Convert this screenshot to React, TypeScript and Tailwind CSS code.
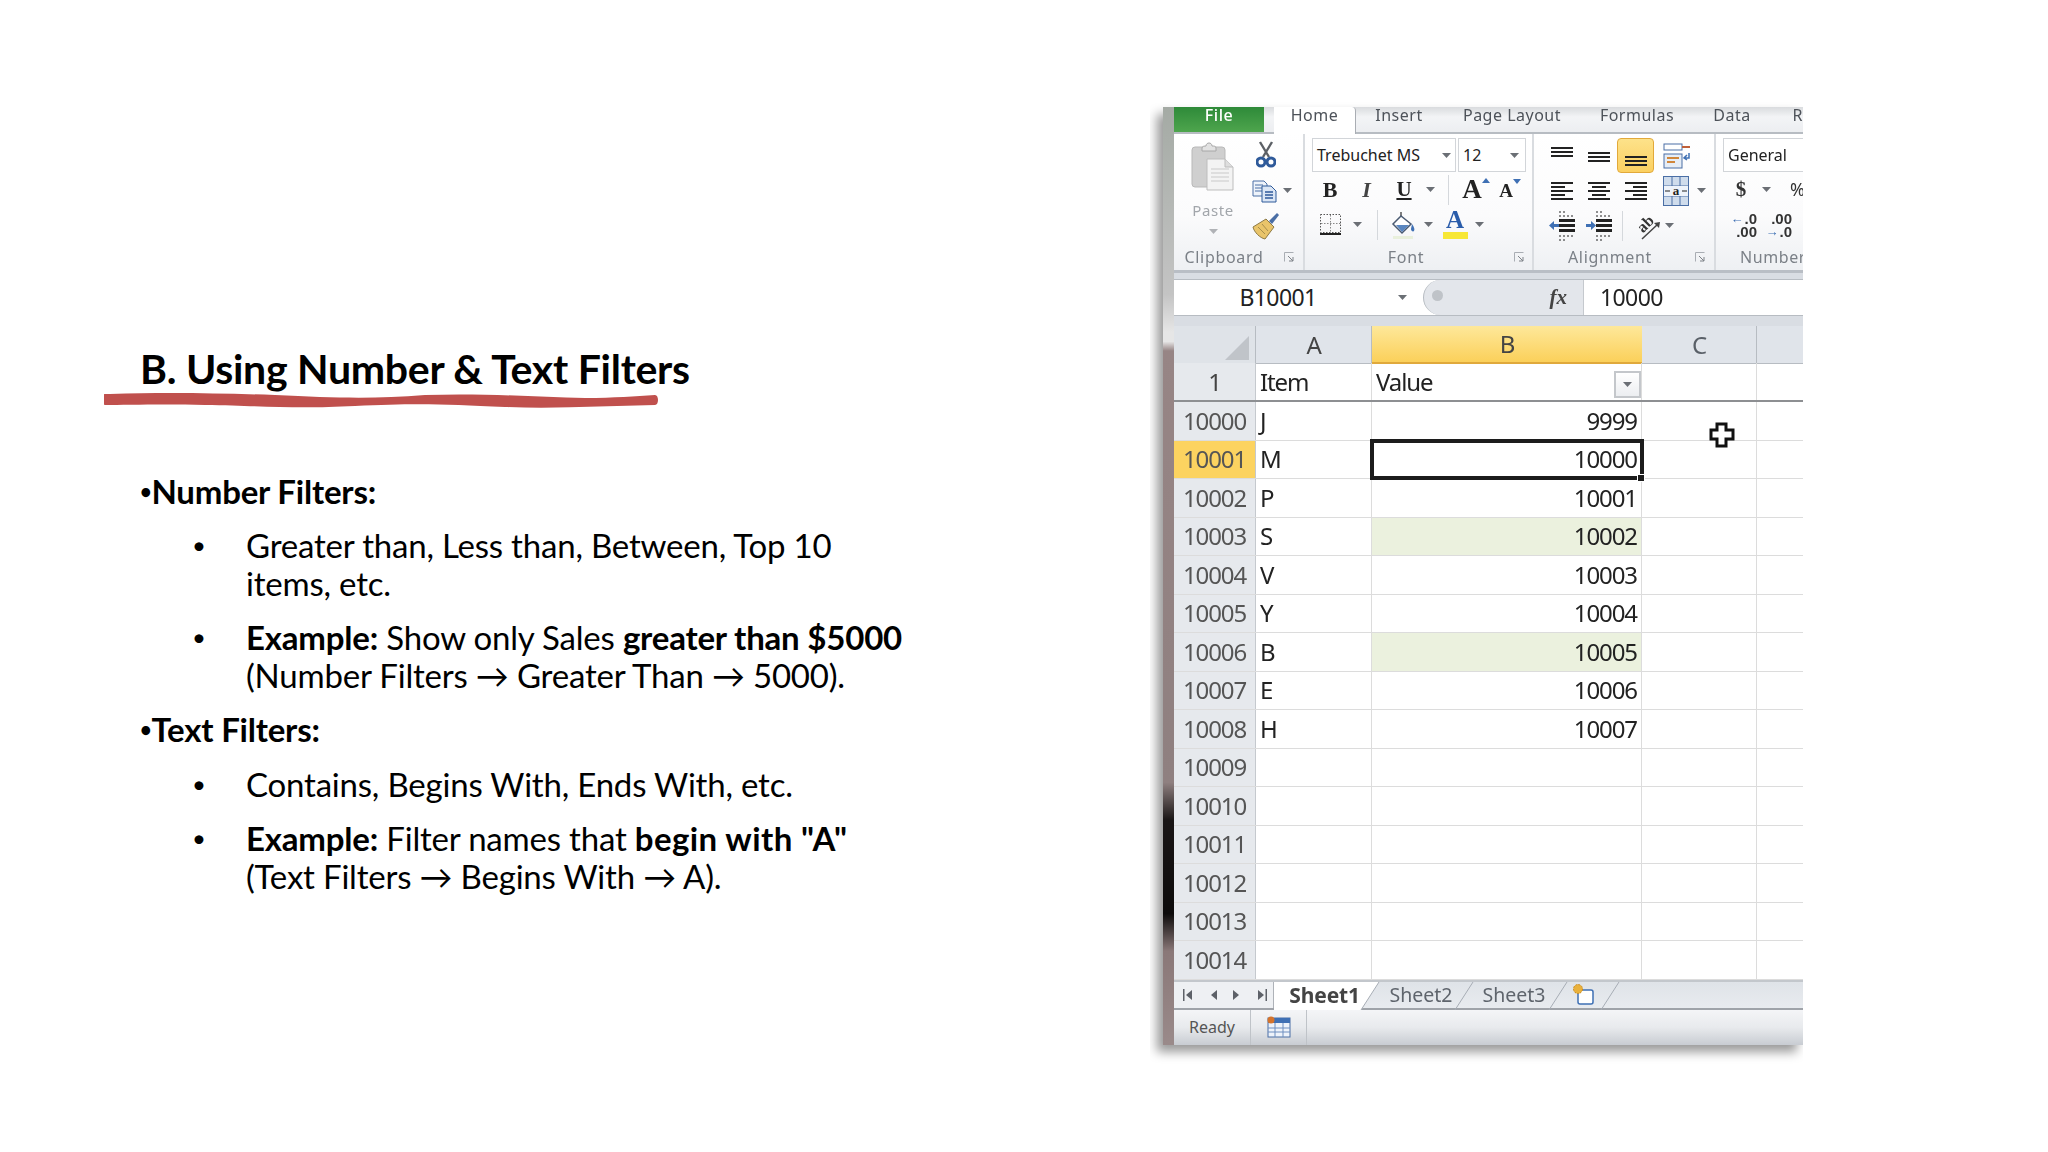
import React from 'react';

const rows = [
  { n: '10000', a: 'J', b: '9999' },
  { n: '10001', a: 'M', b: '10000', active: true },
  { n: '10002', a: 'P', b: '10001' },
  { n: '10003', a: 'S', b: '10002', green: true },
  { n: '10004', a: 'V', b: '10003' },
  { n: '10005', a: 'Y', b: '10004' },
  { n: '10006', a: 'B', b: '10005', green: true },
  { n: '10007', a: 'E', b: '10006' },
  { n: '10008', a: 'H', b: '10007' },
  { n: '10009', a: '', b: '' },
  { n: '10010', a: '', b: '' },
  { n: '10011', a: '', b: '' },
  { n: '10012', a: '', b: '' },
  { n: '10013', a: '', b: '' },
  { n: '10014', a: '', b: '' },
];

const Caret = ({ className = '' }: { className?: string }) => (
  <svg width="9" height="5" viewBox="0 0 9 5" className={className}>
    <path d="M0 0h9L4.5 5z" fill="#6b6f75" />
  </svg>
);

// little stacked-lines icons for the alignment group
const Lines = ({ lines, w = 24, h = 20 }: { lines: number[][]; w?: number; h?: number }) => (
  <svg width={w} height={h} viewBox={`0 0 ${w} ${h}`}>
    {lines.map(([x1, x2, y], i) => (
      <rect key={i} x={x1} y={y} width={x2 - x1} height="2" fill="#222" />
    ))}
  </svg>
);

const ScissorsIcon = () => (
  <svg width="20" height="28" viewBox="0 0 20 28">
    <path d="M4 1l9 15M16 1L7 16" stroke="#5c6066" strokeWidth="2.4" fill="none" />
    <circle cx="5" cy="21" r="4" fill="none" stroke="#2f5a9a" strokeWidth="3" />
    <circle cx="15" cy="21" r="4" fill="none" stroke="#2f5a9a" strokeWidth="3" />
  </svg>
);

const PasteIcon = () => (
  <svg width="44" height="50" viewBox="0 0 44 50">
    <rect x="1" y="6" width="33" height="40" rx="3" fill="#cfcfcf" stroke="#b9b9b9" />
    <path d="M11 7c0-2 3-2 4-2 0-4 6-4 6 0 2 0 4 0 4 2v3H11z" fill="#e2e2e2" stroke="#a8a8a8" />
    <path d="M16 18h18l8 8v23H16z" fill="#f3f3f3" stroke="#bdbdbd" />
    <path d="M34 18v8h8" fill="#dedede" stroke="#bdbdbd" />
    <path d="M20 28h18M20 32h18M20 36h18M20 40h18" stroke="#c9c9c9" />
  </svg>
);

const CopyIcon = () => (
  <svg width="26" height="24" viewBox="0 0 26 24">
    <path d="M1 2h11l3 3v12H1z" fill="#eef3fa" stroke="#4a6ea5" />
    <path d="M3 6h8M3 9h8M3 12h8" stroke="#4a6ea5" />
    <path d="M10 7h9l5 5v11H10z" fill="#dbe6f5" stroke="#2f5a9a" />
    <path d="M13 13h8M13 16h8M13 19h8" stroke="#2f5a9a" strokeWidth="1.5" />
  </svg>
);

const PainterIcon = () => (
  <svg width="28" height="28" viewBox="0 0 28 28">
    <path d="M17 9 25 1l2 2-7 9z" fill="#4a6ea5" />
    <path d="M14 7l8 8-9 12C8 26 2 20 1 15z" fill="#e9c46a" stroke="#8d7a46" />
    <path d="M6 15l7 7M10 12l6 7" stroke="#a88f4c" />
  </svg>
);

const BorderIcon = () => (
  <svg width="24" height="24" viewBox="0 0 24 24">
    <rect x="1.5" y="1.5" width="20" height="18" fill="none" stroke="#555" strokeDasharray="1.5 1.5" />
    <path d="M11.5 2v18M2 10.5h20" stroke="#888" strokeDasharray="1.5 1.5" />
    <rect x="1" y="20" width="21" height="2" fill="#222" />
  </svg>
);

const BucketIcon = () => (
  <svg width="26" height="28" viewBox="0 0 26 28">
    <path d="M10 1v7" stroke="#555" strokeWidth="1.5" />
    <path d="M10 5 2 13l9 9 9-9z" fill="#fff" stroke="#4a5a72" strokeWidth="1.5" />
    <path d="M5 14h13l-7 7z" fill="#5a86c0" />
    <path d="M21 13c2 3 3 5 2 7-1 1-3 0-3-2z" fill="#3f70b4" />
    <rect x="2" y="25" width="20" height="3" fill="#e9f0dc" />
  </svg>
);

const FontColorIcon = () => (
  <div className="flex flex-col items-center">
    <span className="text-[25px] leading-[20px] font-bold text-[#2a5caa] [font-family:'Liberation_Serif',serif]">A</span>
    <span className="block w-[25px] h-[7px] mt-[2px] bg-[#f7e735]" />
  </div>
);

const WrapIcon = () => (
  <svg width="28" height="26" viewBox="0 0 28 26">
    <rect x="1" y="1" width="18" height="6" fill="#fff" stroke="#4a6ea5" />
    <path d="M19 4h8" stroke="#c0603a" strokeWidth="2" />
    <rect x="1" y="11" width="18" height="14" fill="#e6edf6" stroke="#4a6ea5" />
    <path d="M4 15h12M4 19h8" stroke="#d0863a" strokeWidth="2" />
    <path d="M26 10v5h-4M24 12l-3 3 3 2" stroke="#3f70b4" strokeWidth="1.5" fill="none" />
  </svg>
);

const MergeIcon = () => (
  <svg width="26" height="30" viewBox="0 0 26 30">
    <rect x="0.5" y="0.5" width="25" height="29" fill="#cfdcec" stroke="#4a6ea5" />
    <path d="M0 10h26M0 20h26M9 0v10M17 0v10M9 20v10M17 20v10" stroke="#4a6ea5" />
    <rect x="1" y="10" width="24" height="10" fill="#eef3fa" />
    <text x="13" y="19" textAnchor="middle" fontSize="13" fontWeight="700" fill="#222" fontFamily="Liberation Serif">a</text>
    <path d="M2 15h5M24 15h-5" stroke="#222" />
  </svg>
);

const IndentIcon = ({ flip = false }: { flip?: boolean }) => (
  <svg width="28" height="30" viewBox="0 0 28 30">
    <path d="M11 1h8M11 5h14M11 25h14M11 29h8" stroke="#222" strokeDasharray="2 2" />
    <rect x="11" y="8" width="16" height="3" fill="#222" />
    <rect x="11" y="13" width="16" height="3" fill="#222" />
    <rect x="11" y="18" width="16" height="3" fill="#222" />
    {flip ? (
      <path d="M1 13h5v-3l5 4.5-5 4.5v-3H1z" fill="#3f70b4" />
    ) : (
      <path d="M11 13H6v-3l-5 4.5L6 19v-3h5z" fill="#3f70b4" />
    )}
  </svg>
);

const OrientIcon = () => (
  <svg width="26" height="30" viewBox="0 0 26 30">
    <text x="2" y="20" fontSize="16" fontWeight="700" fill="#333" fontFamily="Liberation Serif" transform="rotate(-45 8 14)">ab</text>
    <path d="M7 28 23 13" stroke="#444" strokeWidth="1.5" />
    <path d="M19 12l6-1-1 6z" fill="#444" />
  </svg>
);

const DecimalIcon = ({ more = false }: { more?: boolean }) => (
  <div className="flex flex-col w-[32px] text-[15px] leading-[13px] font-bold text-[#333] [font-family:'Liberation_Sans',sans-serif]">
    <div className="flex items-center justify-end gap-[1px]">
      {!more && <span className="text-[#3f70b4] text-[13px]">←</span>}
      <span>{more ? '.00' : '.0'}</span>
    </div>
    <div className="flex items-center justify-end gap-[1px]">
      {more && <span className="text-[#3f70b4] text-[13px]">→</span>}
      <span>{more ? '.0' : '.00'}</span>
    </div>
  </div>
);

const Launcher = () => (
  <svg width="11" height="11" viewBox="0 0 11 11" className="shrink-0">
    <path d="M0.5 0.5h9M0.5 0.5v9" stroke="#a9adb3" />
    <path d="M4 4l5 5M9 5v4H5" stroke="#7d8187" fill="none" />
  </svg>
);

const GroupLabel = ({ text, className = '', pad = 'pr-[8px]' }: { text: string; className?: string; pad?: string }) => (
  <div className={`h-[26px] flex items-center text-[16px] tracking-[0.7px] text-[#7b8087] ${className}`}>
    <span className={`flex-1 text-center ${pad}`}>{text}</span>
    <Launcher />
  </div>
);

const Cell = ({ w, children, className = '' }: { w: number; children?: React.ReactNode; className?: string }) => (
  <div className={`shrink-0 flex items-center justify-center ${className}`} style={{ width: w }}>
    {children}
  </div>
);

const Sep = () => <div className="w-px h-[30px] bg-[#d5d8dc] shrink-0" />;

const Slash = ({ fill }: { fill?: string }) => (
  <svg width="20" height="28" viewBox="0 0 20 28" className="shrink-0 self-start">
    {fill && <path d="M0 0v28h1L19 0z" fill={fill} />}
    <path d="M1 28 19 0" stroke="#a7adb5" fill="none" />
  </svg>
);

const NavArrow = ({ dir, bar = false }: { dir: 'left' | 'right'; bar?: boolean }) => (
  <svg width="12" height="14" viewBox="0 0 12 14">
    {dir === 'left' ? <path d="M10 2v10L4 7z" fill="#5d6168" /> : <path d="M2 2v10l6-5z" fill="#5d6168" />}
    {bar && (dir === 'left' ? <rect x="1" y="1" width="1.5" height="12" fill="#5d6168" /> : <rect x="9.5" y="1" width="1.5" height="12" fill="#5d6168" />)}
  </svg>
);

function Ribbon() {
  return (
    <>
      <div className="h-[27px] flex items-stretch bg-[linear-gradient(#d9dbde,#f3f4f6_40%,#eceef1)] border-b-2 border-[#b7bcc2] text-[16px] leading-[16px] tracking-[0.5px] text-[#4d5259]">
        <div className="w-[90px] flex items-start justify-center text-white bg-[linear-gradient(#2e8a39,#4ea54d)] font-medium">File</div>
        <div className="w-[10px]" />
        <div className="w-[82px] -mb-[2px] flex items-start justify-center bg-white border-r border-[#a9adb3] rounded-tr-sm">Home</div>
        <div className="w-[86px] flex items-start justify-center">Insert</div>
        <div className="w-[140px] flex items-start justify-center">Page Layout</div>
        <div className="w-[110px] flex items-start justify-center">Formulas</div>
        <div className="w-[80px] flex items-start justify-center">Data</div>
        <div className="flex-1 flex items-start justify-end">R</div>
      </div>

      <div className="h-[139px] flex bg-[linear-gradient(#ffffff,#fbfbfc_60%,#eef0f3)] border-b-[3px] border-[#b9bec5]">
        {/* Clipboard */}
        <div className="w-[131px] shrink-0 flex flex-col border-r-2 border-[#d9dce0]">
          <div className="flex-1 flex">
            <div className="w-[78px] flex flex-col items-center pt-[7px]">
              <PasteIcon />
              <span className="mt-[8px] text-[15px] leading-[22px] tracking-[0.6px] text-[#a2a6ab]">Paste</span>
              <Caret className="mt-[8px] opacity-50" />
            </div>
            <div className="flex flex-col pt-[3px]">
              <div className="h-[36px] flex items-center pl-[4px]">
                <ScissorsIcon />
              </div>
              <div className="h-[35px] flex items-center gap-[5px]">
                <CopyIcon />
                <Caret />
              </div>
              <div className="h-[35px] flex items-center">
                <PainterIcon />
              </div>
            </div>
          </div>
          <GroupLabel text="Clipboard" className="pr-[8px]" pad="pr-[10px]" />
        </div>

        {/* Font */}
        <div className="w-[229px] shrink-0 flex flex-col border-r-2 border-[#d9dce0] pl-[7px]">
          <div className="flex-1 flex flex-col pt-[4px]">
            <div className="flex h-[34px] gap-[2px] text-[16px] text-[#222]">
              <div className="w-[144px] border border-[#d2d5d9] bg-white flex items-center px-[4px]">
                <span className="flex-1 whitespace-nowrap">Trebuchet MS</span>
                <Caret />
              </div>
              <div className="w-[68px] border border-[#d2d5d9] bg-white flex items-center px-[4px]">
                <span className="flex-1">12</span>
                <Caret className="mr-[2px]" />
              </div>
            </div>
            <div className="h-[35px] flex items-center [font-family:'Liberation_Serif',serif] text-[#222]">
              <Cell w={36}><span className="text-[22px] font-bold">B</span></Cell>
              <Cell w={37}><span className="text-[22px] italic font-bold text-[#444]">I</span></Cell>
              <Cell w={38}><span className="text-[21px] font-bold underline">U</span></Cell>
              <Cell w={14}><Caret /></Cell>
              <Cell w={22}><Sep /></Cell>
              <Cell w={34}><span className="text-[27px] font-bold">A</span><span className="w-0 h-0 -mt-[18px] border-x-[4px] border-x-transparent border-b-[5px] border-b-[#3f70b4]" /></Cell>
              <Cell w={34}><span className="text-[19px] font-bold mt-[4px]">A</span><span className="w-0 h-0 -mt-[16px] border-x-[4px] border-x-transparent border-t-[5px] border-t-[#3f70b4]" /></Cell>
            </div>
            <div className="h-[35px] flex items-center">
              <Cell w={38}><BorderIcon /></Cell>
              <Cell w={14}><Caret /></Cell>
              <Cell w={26}><Sep /></Cell>
              <Cell w={28}><BucketIcon /></Cell>
              <Cell w={20}><Caret /></Cell>
              <Cell w={34}><FontColorIcon /></Cell>
              <Cell w={14}><Caret /></Cell>
            </div>
          </div>
          <div className="pr-[7px]"><GroupLabel text="Font" pad="pr-[14px]" /></div>
        </div>

        {/* Alignment */}
        <div className="w-[182px] shrink-0 flex flex-col border-r-2 border-[#d9dce0] pl-[9px]">
          <div className="flex-1 flex flex-col pt-[4px]">
            <div className="h-[35px] flex items-center">
              <Cell w={37}><Lines lines={[[1, 23, 1], [1, 23, 5], [1, 23, 9]]} /></Cell>
              <Cell w={37}><Lines lines={[[1, 23, 6], [1, 23, 10], [1, 23, 14]]} /></Cell>
              <Cell w={37} className="h-[35px] rounded-[4px] border border-[#e2a93a] bg-[linear-gradient(#fde28a,#fbd061)]">
                <Lines lines={[[1, 23, 10], [1, 23, 14], [1, 23, 18]]} />
              </Cell>
              <Cell w={48} className="pr-[3px]"><WrapIcon /></Cell>
            </div>
            <div className="h-[35px] flex items-center">
              <Cell w={37}><Lines lines={[[1, 23, 1], [1, 15, 5], [1, 23, 9], [1, 15, 13], [1, 23, 17]]} /></Cell>
              <Cell w={37}><Lines lines={[[1, 23, 1], [5, 19, 5], [1, 23, 9], [5, 19, 13], [1, 23, 17]]} /></Cell>
              <Cell w={37}><Lines lines={[[1, 23, 1], [9, 23, 5], [1, 23, 9], [9, 23, 13], [1, 23, 17]]} /></Cell>
              <Cell w={43}><MergeIcon /></Cell>
              <Caret />
            </div>
            <div className="h-[35px] flex items-center">
              <Cell w={37}><IndentIcon /></Cell>
              <Cell w={37}><IndentIcon flip /></Cell>
              <Cell w={10}><Sep /></Cell>
              <Cell w={42}><OrientIcon /></Cell>
              <Caret className="-ml-[4px]" />
            </div>
          </div>
          <div className="pr-[8px]"><GroupLabel text="Alignment" pad="pr-[18px]" /></div>
        </div>

        {/* Number, cut off by the crop */}
        <div className="flex-1 min-w-0 overflow-hidden flex flex-col pl-[7px]">
          <div className="flex-1 flex flex-col pt-[4px]">
            <div className="h-[34px] w-[90px] border border-[#d2d5d9] bg-white flex items-center px-[4px] text-[16px] text-[#222]">General</div>
            <div className="h-[35px] flex items-center text-[21px] font-bold text-[#333] [font-family:'Liberation_Serif',serif]">
              <Cell w={36}>$</Cell>
              <Cell w={14}><Caret /></Cell>
              <Cell w={32} className="justify-end font-normal overflow-hidden"><span className="[font-family:'Noto_Sans',sans-serif] text-[18px] pl-[14px]">%</span></Cell>
            </div>
            <div className="h-[35px] flex items-center gap-[3px] pl-[2px]">
              <DecimalIcon />
              <DecimalIcon more />
            </div>
          </div>
          <div className="h-[26px] flex items-center pl-[17px] text-[16px] tracking-[0.6px] text-[#7b8087] whitespace-nowrap">Number</div>
        </div>
      </div>
    </>
  );
}

function FormulaBar() {
  return (
    <div className="bg-[#d9dde3] pt-[6px] pb-[10px]">
      <div className="h-[37px] flex items-stretch bg-white border-y border-[#b7bcc2]">
        <div className="w-[249px] shrink-0 flex items-center text-[23px] tracking-[-0.6px] text-[#222]">
          <span className="flex-1 text-center pr-[16px]">B10001</span>
          <Caret className="mr-[16px]" />
        </div>
        <div className="w-[160px] shrink-0 flex items-center justify-between bg-[#e3e6eb] rounded-l-[22px] border-l border-[#b7bcc2] pl-[8px] pr-[16px]">
          <span className="w-[11px] h-[11px] -mt-[4px] rounded-full bg-[#bfc3c8]" />
          <span className="text-[21px] italic font-bold text-[#444] [font-family:'Liberation_Serif',serif]">fx</span>
        </div>
        <div className="flex-1 flex items-center pl-[16px] text-[23px] tracking-[-0.6px] text-[#222] border-l border-[#c5c9ce]">10000</div>
      </div>
    </div>
  );
}

function Sheet() {
  const gridCols = 'grid grid-cols-[82px_116px_270px_115px_46px]';
  return (
    <div className="relative text-[24px] tracking-[-1.1px] text-[#222]">
      <div className={`${gridCols} h-[37px]`}>
        <div className="bg-[#dfe3e8] border-r border-[#b7bcc2] border-b border-b-[#b7bcc2] flex items-end justify-end pr-[6px] pb-[3px]">
          <div className="w-0 h-0 border-l-[24px] border-l-transparent border-b-[24px] border-b-[#c0c4c9]" />
        </div>
        <div className="bg-[#e0e4ea] border-r border-[#b7bcc2] border-b border-b-[#b7bcc2] flex items-center justify-center text-[#444]">A</div>
        <div className="bg-[linear-gradient(#fee89a,#fbd05a)] border-b-2 border-[#e0a93c] flex items-center justify-center text-[#444]">B</div>
        <div className="bg-[#e0e4ea] border-r border-[#b7bcc2] border-b border-b-[#b7bcc2] flex items-center justify-center text-[#5a6068]">C</div>
        <div className="bg-[#e0e4ea] border-b border-b-[#b7bcc2]" />
      </div>

      <div className={`${gridCols} h-[39px] border-b-2 border-[#8d8f92]`}>
        <div className="bg-[#e6e9ed] border-r border-[#c5c9ce] flex items-center justify-center text-[#444]">1</div>
        <div className="border-r border-[#dcdcdc] flex items-center pl-[4px]">Item</div>
        <div className="border-r border-[#dcdcdc] flex items-center justify-between pl-[4px]">
          <span>Value</span>
          <span className="w-[27px] h-[27px] mt-[6px] border-2 border-[#c4c7cb] bg-[linear-gradient(#ffffff,#eceef1)] flex items-center justify-center">
            <Caret />
          </span>
        </div>
        <div className="border-r border-[#dcdcdc]" />
        <div />
      </div>

      {rows.map((r) => (
        <div key={r.n} className={`${gridCols} h-[38.5px] border-b border-[#dcdcdc]`}>
          <div className={`flex items-center justify-center text-[#555] border-r border-[#c5c9ce] ${r.active ? 'bg-[#fcd360]' : 'bg-[#e6e9ed]'}`}>{r.n}</div>
          <div className="border-r border-[#dcdcdc] flex items-center pl-[4px]">{r.a}</div>
          <div className={`relative flex items-center justify-end pr-[4px] border-r border-[#dcdcdc] ${r.green ? 'bg-[#ebf1de]' : ''} ${r.active ? 'outline-[4px] outline-[#1c1c1c] -outline-offset-2 z-10' : ''}`}>
            {r.b}
            {r.active && <span className="absolute -right-[4px] -bottom-[4px] w-[8px] h-[8px] bg-[#1c1c1c] border border-white" />}
          </div>
          <div className="border-r border-[#dcdcdc]" />
          <div />
        </div>
      ))}

      {/* mouse pointer */}
      <svg width="28" height="28" viewBox="0 0 28 28" className="absolute left-[534px] top-[95px]">
        <path d="M9 3h9v6h7v9h-7v7H9v-7H3V9h6z" fill="#fff" stroke="#111" strokeWidth="3" />
      </svg>
    </div>
  );
}

function SheetTabs() {
  return (
    <div className="h-[30px] flex items-stretch bg-[linear-gradient(#dfe3e8,#e8ebef)] border-t-2 border-[#c3c7cc] border-b-2 border-b-[#9fa3a9] text-[19.5px] text-[#5e646c]">
      <div className="w-[100px] shrink-0 flex items-center justify-between pl-[8px] pr-[5px] border-r border-[#aeb2b8] bg-[#eef0f3]">
        <NavArrow dir="left" bar />
        <NavArrow dir="left" />
        <NavArrow dir="right" />
        <NavArrow dir="right" bar />
      </div>
      <div className="w-[86px] shrink-0 -mb-[2px] bg-white flex items-center justify-end font-bold text-[21px] text-[#444] tracking-[-0.1px]">Sheet1</div>
      <Slash fill="#ffffff" />
      <div className="w-[74px] shrink-0 flex items-center justify-center pl-[8px]">Sheet2</div>
      <Slash />
      <div className="w-[74px] shrink-0 flex items-center justify-center pl-[6px]">Sheet3</div>
      <Slash />
      <div className="w-[32px] shrink-0 flex items-center justify-center">
        <svg width="24" height="22" viewBox="0 0 24 22">
          <rect x="6" y="6" width="15" height="14" rx="2" fill="#fff" stroke="#3f70b4" strokeWidth="1.5" />
          <circle cx="6" cy="5" r="4.5" fill="#e9b13c" stroke="#c98a1d" strokeDasharray="2 1" />
        </svg>
      </div>
      <Slash />
    </div>
  );
}

function StatusBar() {
  return (
    <div className="flex-1 flex items-stretch bg-[linear-gradient(#f4f5f7,#e8eaed_50%,#c8ccd2)] text-[16px] text-[#555]">
      <div className="w-[77px] flex items-center justify-center border-r border-[#bfc3c8]">Ready</div>
      <div className="w-[56px] flex items-center justify-center border-r border-[#bfc3c8]">
        <svg width="24" height="22" viewBox="0 0 24 22">
          <rect x="1" y="2" width="22" height="19" fill="#eef3fa" stroke="#4a6ea5" />
          <rect x="1" y="2" width="22" height="5" fill="#3f70b4" />
          <path d="M1 12h22M1 16h22M8 7v14M16 7v14" stroke="#6f8fc0" />
          <circle cx="4" cy="4" r="3.5" fill="#d5742c" />
        </svg>
      </div>
      <div className="flex-1" />
    </div>
  );
}

function Excel() {
  return (
    <div className="w-[653px] h-[1080px] pl-[13px] pt-[107px] overflow-hidden shrink-0">
      <div className="w-[640px] h-[938px] flex shadow-[-6px_7px_10px_rgba(0,0,0,0.4)] blur-[0.4px] [font-family:'Noto_Sans',sans-serif]">
        <div className="w-[11px] shrink-0 bg-[linear-gradient(#a4aaa4,#c4c4c4_20%,#e6e6e6_24%,#e6e6e6_25%,#978585_26%,#8f8080_72%,#1a1616_76%,#0d0b0b_86%,#8a7878_90%,#9a8a8a)]" />
        <div className="flex-1 min-w-0 flex flex-col bg-white">
          <Ribbon />
          <FormulaBar />
          <Sheet />
          <SheetTabs />
          <StatusBar />
        </div>
      </div>
    </div>
  );
}

const Bullet = ({ children }: { children: React.ReactNode }) => (
  <li className="flex">
    <span className="w-[106px] pl-[52px] shrink-0 text-[24px]">•</span>
    <div className="whitespace-nowrap">{children}</div>
  </li>
);

const Heading = ({ children }: { children: React.ReactNode }) => (
  <div className="font-bold"><span className="text-[20px] align-[5px]">•</span>{children}</div>
);

export default function App() {
  return (
    <div className="w-[2048px] h-[1152px] bg-white flex overflow-hidden text-black [font-family:'Lato',sans-serif]">
      <div className="w-[1150px] shrink-0 pl-[140px] pt-[344px]">
        <h1 className="text-[41px] leading-[50px] font-bold tracking-[-0.27px] whitespace-nowrap">B. Using Number &amp; Text Filters</h1>
        <svg width="558" height="20" viewBox="0 0 556 20" className="-ml-[36px] block -mt-[2px]">
          <path d="M5 2C60 0 110 1 170 3c60 3 100 4 150 0 60-2 110 2 160 3 30 0 50-2 70-3 4 0 4 10 0 10-50 1-100 4-150 2-60-3-90-4-150-1-60 3-90 0-150-1-40-1-80 0-100 0-5 0-5-11 0-11z" fill="#c0504d" />
        </svg>
        <div className="mt-[60px] text-[33px] leading-[38.5px] tracking-[-0.2px]">
          <Heading>Number Filters:</Heading>
          <ul className="mt-[15px] flex flex-col gap-[15px]">
            <Bullet>Greater than, Less than, Between, Top 10<br />items, etc.</Bullet>
            <Bullet><b>Example:</b> Show only Sales <b>greater than $5000</b><br />(Number Filters → Greater Than → 5000).</Bullet>
          </ul>
          <div className="mt-[15px]"><Heading>Text Filters:</Heading></div>
          <ul className="mt-[17px] flex flex-col gap-[15px]">
            <Bullet>Contains, Begins With, Ends With, etc.</Bullet>
            <Bullet><b>Example:</b> Filter names that <b className="tracking-[0.4px]">begin with "A"</b><br />(Text Filters → Begins With → A).</Bullet>
          </ul>
        </div>
      </div>
      <Excel />
    </div>
  );
}
